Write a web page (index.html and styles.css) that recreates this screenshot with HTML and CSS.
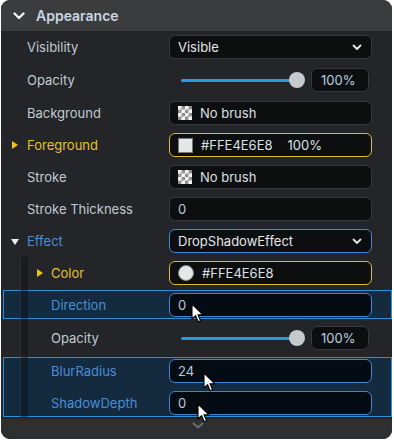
FILE: index.html
```html
<!DOCTYPE html>
<html lang="en">
<head>
    <meta charset="UTF-8">
    <meta name="viewport" content="width=device-width, initial-scale=1.0">
    <title>Appearance</title>
    <link rel="stylesheet" href="styles.css">
</head>
<body>
    <div class="panel">
        <div class="header">
            <svg class="chev" width="12" height="8" viewBox="0 0 12 8"><polyline points="1.5,1.5 6,6 10.5,1.5" fill="none" stroke="#f2f4f6" stroke-width="2.4" stroke-linecap="round" stroke-linejoin="round"/></svg>
            <span>Appearance</span>
        </div>

        <div class="row">
            <div class="label">Visibility</div>
            <div class="field select">
                <span>Visible</span>
                <svg width="10" height="7" viewBox="0 0 10 7"><polyline points="1.5,1.5 5,5 8.5,1.5" fill="none" stroke="#e6e9ec" stroke-width="1.8" stroke-linecap="round" stroke-linejoin="round"/></svg>
            </div>
        </div>

        <div class="row tall">
            <div class="label">Opacity</div>
            <div class="slider">
                <div class="track"></div>
                <div class="thumb"></div>
                <div class="field pct">100%</div>
            </div>
        </div>

        <div class="row">
            <div class="label">Background</div>
            <div class="field"><span class="checker"></span><span class="txt">No brush</span></div>
        </div>

        <div class="row">
            <div class="label yellow"><span class="tri-right"></span>Foreground</div>
            <div class="field gold"><span class="swatch"></span><span class="txt">#FFE4E6E8</span><span class="txt pad">100%</span></div>
        </div>

        <div class="row">
            <div class="label">Stroke</div>
            <div class="field"><span class="checker"></span><span class="txt">No brush</span></div>
        </div>

        <div class="row">
            <div class="label">Stroke Thickness</div>
            <div class="field"><span class="val">0</span></div>
        </div>

        <div class="row">
            <div class="label blue"><span class="tri-down"></span>Effect</div>
            <div class="field select blueline">
                <span>DropShadowEffect</span>
                <svg width="10" height="7" viewBox="0 0 10 7"><polyline points="1.5,1.5 5,5 8.5,1.5" fill="none" stroke="#e6e9ec" stroke-width="1.8" stroke-linecap="round" stroke-linejoin="round"/></svg>
            </div>
        </div>

        <div class="nested">
            <div class="row">
                <div class="label sub yellow"><span class="tri-right"></span>Color</div>
                <div class="field gold"><span class="dot"></span><span class="txt">#FFE4E6E8</span></div>
            </div>

            <div class="hl one">
                <div class="row">
                    <div class="label sub blue">Direction</div>
                    <div class="field active"><span class="val">0</span></div>
                </div>
            </div>

            <div class="row tall">
                <div class="label sub">Opacity</div>
                <div class="slider">
                    <div class="track"></div>
                    <div class="thumb"></div>
                    <div class="field pct">100%</div>
                </div>
            </div>

            <div class="hl two">
                <div class="row">
                    <div class="label sub blue">BlurRadius</div>
                    <div class="field active"><span class="val">24</span></div>
                </div>
                <div class="row">
                    <div class="label sub blue">ShadowDepth</div>
                    <div class="field active"><span class="val">0</span></div>
                </div>
            </div>
        </div>

        <div class="footer">
            <svg width="12" height="7" viewBox="0 0 12 7"><polyline points="1.5,1.5 6,5.5 10.5,1.5" fill="none" stroke="#6b6e71" stroke-width="2" stroke-linecap="round" stroke-linejoin="round"/></svg>
        </div>

        <!-- mouse pointers -->
        <svg class="cursor c1" width="14" height="21" viewBox="0 0 14 21"><path d="M1 1 L1 16 L4.6 12.6 L7.2 18.8 L9.6 17.8 L7 11.8 L12 11.8 Z" fill="#fff" stroke="#000" stroke-width="1.1" stroke-linejoin="round"/></svg>
        <svg class="cursor c2" width="14" height="21" viewBox="0 0 14 21"><path d="M1 1 L1 16 L4.6 12.6 L7.2 18.8 L9.6 17.8 L7 11.8 L12 11.8 Z" fill="#fff" stroke="#000" stroke-width="1.1" stroke-linejoin="round"/></svg>
        <svg class="cursor c3" width="14" height="21" viewBox="0 0 14 21"><path d="M1 1 L1 16 L4.6 12.6 L7.2 18.8 L9.6 17.8 L7 11.8 L12 11.8 Z" fill="#fff" stroke="#000" stroke-width="1.1" stroke-linejoin="round"/></svg>
    </div>
</body>
</html>
```

FILE: styles.css
```css
* {
    margin: 0;
    padding: 0;
    box-sizing: border-box;
    font-family: Inter, "Noto Sans", sans-serif;
}
body {
    background: #fff;
    width: 394px;
    height: 442px;
    overflow: hidden;
}
.panel {
    position: relative;
    width: 391px;
    height: 439px;
    margin-left: 1px;
    background: #232528;
    border-radius: 9px;
    overflow: hidden;
    display: flex;
    flex-direction: column;
}
.header {
    height: 31px;
    background: #3b3c3e;
    display: flex;
    align-items: center;
    padding-left: 12px;
    gap: 11px;
}
.header span {
    font-size: 14px;
    font-weight: 600;
    color: #c9d6e3;
}
.row {
    position: relative;
    z-index: 1;
    height: 32px;
    display: flex;
    align-items: center;
}
.row.tall {
    height: 34px;
}
.label {
    width: 168px;
    flex-shrink: 0;
    padding-left: 26px;
    font-size: 13px;
    color: #c2cad2;
    position: relative;
}
.label.sub {
    padding-left: 50px;
}
.label.yellow {
    color: #e6c22f;
}
.label.blue {
    color: #4a8fd8;
}
.tri-right {
    position: absolute;
    left: 11px;
    top: 4px;
    border-left: 6px solid #f2c21f;
    border-top: 4.5px solid transparent;
    border-bottom: 4.5px solid transparent;
}
.label.sub .tri-right {
    left: 36px;
}
.tri-down {
    position: absolute;
    left: 10px;
    top: 6px;
    border-top: 6px solid #eef0f2;
    border-left: 4px solid transparent;
    border-right: 4px solid transparent;
}
.field {
    width: 203px;
    height: 24px;
    flex-shrink: 0;
    background: #0d0e0f;
    border: 1px solid #37393c;
    border-radius: 6px;
    display: flex;
    align-items: center;
    padding: 0 8px;
    font-size: 13px;
    color: #e3e6ea;
}
.field.select {
    justify-content: space-between;
    padding-right: 9px;
}
.field.gold {
    border-color: #e0b92a;
}
.field.blueline {
    border-color: #3a88d8;
}
.field.active {
    border-color: #3a88d8;
    background: #050b13;
}
.val {
    color: #b7cadc;
}
.txt {
    color: #dde1e5;
    margin-left: 8px;
}
.txt.pad {
    margin-left: 15px;
}
.checker {
    width: 14px;
    height: 14px;
    background-color: #f4f4f4;
    background-image:
        linear-gradient(45deg, #8a8a8a 25%, transparent 25%, transparent 75%, #8a8a8a 75%),
        linear-gradient(45deg, #8a8a8a 25%, transparent 25%, transparent 75%, #8a8a8a 75%);
    background-size: 7px 7px;
    background-position: 0 0, 3.5px 3.5px;
}
.swatch {
    width: 15px;
    height: 15px;
    background: #e4e6e8;
    border: 1px solid #777;
}
.dot {
    width: 16px;
    height: 16px;
    border-radius: 50%;
    background: #e4e6e8;
    border: 1px solid #888;
}
.slider {
    width: 203px;
    display: flex;
    align-items: center;
}
.track {
    flex-shrink: 0;
    margin-left: 12px;
    width: 111px;
    height: 3px;
    background: #2a9be2;
    border-radius: 2px;
}
.thumb {
    flex-shrink: 0;
    width: 16px;
    height: 16px;
    border-radius: 50%;
    background: #c6cacd;
    margin-left: -3px;
}
.field.pct {
    width: 58px;
    margin-left: 6px;
    color: #bcd0e3;
    padding-left: 9px;
}
.nested {
    position: relative;
}
.nested::before {
    content: "";
    position: absolute;
    left: 19px;
    top: 0;
    bottom: 1px;
    width: 7px;
    background: rgba(8, 10, 12, 0.35);
    border-left: 1px solid rgba(70, 72, 76, 0.4);
    z-index: 2;
}
.hl {
    position: relative;
}
.hl::before {
    content: "";
    position: absolute;
    left: 2px;
    right: 0;
    top: 1px;
    bottom: 2px;
    background: #132a3f;
    border: 1px solid #2c8fd8;
    z-index: 0;
}
.hl.two::before {
    top: 2px;
    bottom: 2px;
}
.footer {
    flex: 1;
    background: #2d2f31;
    display: flex;
    justify-content: center;
    padding-top: 3px;
    padding-left: 2px;
}
.cursor {
    position: absolute;
    z-index: 5;
}
.c1 {
    left: 190px;
    top: 303px;
}
.c2 {
    left: 202px;
    top: 372px;
}
.c3 {
    left: 196px;
    top: 403px;
}
```
